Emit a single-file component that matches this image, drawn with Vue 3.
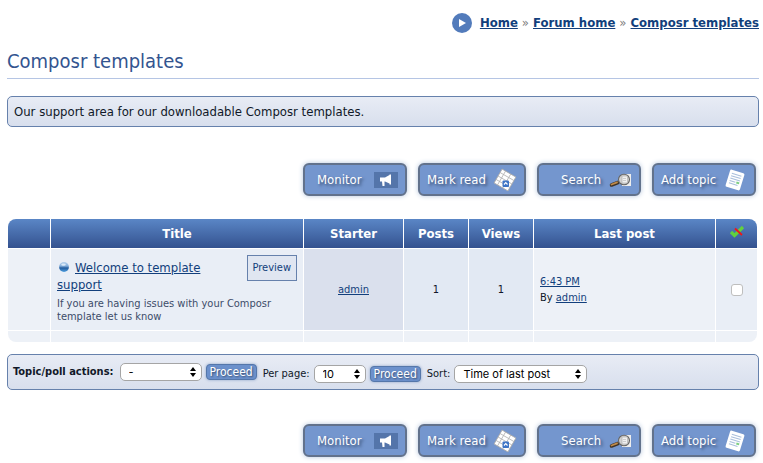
<script setup>
import { ref } from 'vue'

const crumbs = ['Home', 'Forum home', 'Composr templates']
const actions = [
  { label: 'Monitor', icon: 'monitor' },
  { label: 'Mark read', icon: 'mark' },
  { label: 'Search', icon: 'search' },
  { label: 'Add topic', icon: 'add' }
]
const places = ['top', 'bottom']
const selected = ref(false)
</script>

<template>
  <div class="page">
    <nav class="crumbs" aria-label="Breadcrumbs">
      <svg class="crumb-icon" viewBox="0 0 20 20" aria-hidden="true">
        <circle cx="10" cy="10" r="10" fill="#527bbb" />
        <path d="M7 6 L14 10 L7 14 Z" fill="#fff" />
      </svg>
      <template v-for="(crumb, i) in crumbs" :key="crumb">
        <span v-if="i" class="sep">»</span>
        <a href="#">{{ crumb }}</a>
      </template>
    </nav>

    <h1>Composr templates</h1>

    <p class="panel intro">Our support area for our downloadable Composr templates.</p>

    <template v-for="place in places" :key="place">
      <div class="buttons" :class="place">
        <button v-for="a in actions" :key="a.label" type="button" class="big" :class="a.icon">
          <span>{{ a.label }}</span>
          <svg v-if="a.icon === 'monitor'" viewBox="0 0 24 24" aria-hidden="true">
            <rect x="0" y="4" width="24" height="16" fill="#5475aa" />
            <path d="M6 9.500 L11 9.500 L15.500 7 V6.500 H17 V16.500 H15.500 V15.500 L11 13.500 H10.500 V18 H8.500 L8 13.500 H6 Z" fill="#fff" />
          </svg>
          <svg v-else-if="a.icon === 'mark'" viewBox="0 0 24 24" aria-hidden="true">
            <g transform="rotate(30 12 12)">
              <rect x="4" y="4" width="16" height="16" fill="#fff" stroke="#a8a8a8" stroke-width="0.8" />
              <path d="M4 8H20M4 12H20M4 16H20M8 4V20M14 4V20" stroke="#b4b4b4" stroke-width="0.8" />
            </g>
            <rect x="9.500" y="12.500" width="6.500" height="6.500" rx="1" fill="#3d74c6" />
            <path d="M11 16.500 L12.750 14.700 L14.500 16.500" fill="none" stroke="#fff" stroke-width="1.200" />
          </svg>
          <svg v-else-if="a.icon === 'search'" viewBox="0 0 24 24" aria-hidden="true">
            <rect x="14" y="6" width="9" height="12" fill="#eee" />
            <path d="M3.500 17 L10 14.500" stroke="#3f3328" stroke-width="3.500" stroke-linecap="round" />
            <path d="M3.500 16.500 L9 14.300" stroke="#c08a49" stroke-width="1.800" stroke-linecap="round" />
            <ellipse cx="16" cy="11.500" rx="5.500" ry="5.300" fill="#d0d0d0" stroke="#666" stroke-width="1.100" />
            <path d="M14 8H19.500V15H14Z" fill="#f0f0f0" stroke="#b0b0b0" stroke-width="0.7" />
            <path d="M15 10.500H18M15 12.500H18" stroke="#c4c4c4" stroke-width="0.8" />
          </svg>
          <svg v-else viewBox="0 0 24 24" aria-hidden="true">
            <g transform="rotate(17 12 12)">
              <rect x="4.500" y="3" width="15" height="18" rx="1.500" fill="#fff" />
              <path d="M7 6.500H17M7 9H17M7 11.500H17M7 14H13M7 16.500H16" stroke="#a9bfdc" stroke-width="1" />
              <path d="M14 14H17" stroke="#7cce82" stroke-width="2" />
            </g>
          </svg>
        </button>
      </div>

      <template v-if="place === 'top'">
        <div class="table-wrap">
          <table>
            <colgroup>
              <col class="c-mark" /><col class="c-title" /><col class="c-starter" />
              <col class="c-count" /><col class="c-count" /><col class="c-last" /><col class="c-tick" />
            </colgroup>
            <thead>
              <tr>
                <th></th>
                <th>Title</th>
                <th>Starter</th>
                <th>Posts</th>
                <th>Views</th>
                <th>Last post</th>
                <th>
                  <svg class="tick" viewBox="0 0 16 14" role="img" aria-label="Mark">
                    <path d="M2 7 L5.500 10.500 L14 2" fill="none" stroke="#62d13d" stroke-width="3.200" />
                    <path d="M6 3.500 L13 10" stroke="#f01616" stroke-width="1.800" />
                  </svg>
                </th>
              </tr>
            </thead>
            <tbody>
              <tr class="topic">
                <td></td>
                <td class="title">
                  <a href="#" class="preview">Preview</a>
                  <div class="topic-line">
                    <svg class="ball" viewBox="0 0 10 10" aria-hidden="true">
                      <defs>
                        <linearGradient id="ball" x1="0" y1="0" x2="0" y2="1">
                          <stop offset="0" stop-color="#b4d0ec" />
                          <stop offset="0.400" stop-color="#86b0dc" />
                          <stop offset="0.600" stop-color="#235c9f" />
                          <stop offset="1" stop-color="#4fa0df" />
                        </linearGradient>
                      </defs>
                      <circle cx="5" cy="5" r="4.900" fill="url(#ball)" />
                      <ellipse cx="4.500" cy="2.600" rx="2.300" ry="1.200" fill="#dceaf8" />
                    </svg>
                    <a href="#">Welcome to template support</a>
                  </div>
                  <p>If you are having issues with your Composr template let us know</p>
                </td>
                <td class="starter"><a href="#">admin</a></td>
                <td class="count">1</td>
                <td class="count">1</td>
                <td class="last"><a href="#">6:43 PM</a><br />By <a href="#">admin</a></td>
                <td class="select"><input v-model="selected" type="checkbox" aria-label="Select topic" /></td>
              </tr>
              <tr class="foot">
                <td v-for="n in 7" :key="n"></td>
              </tr>
            </tbody>
          </table>
        </div>

        <form class="panel controls" @submit.prevent>
          <div class="group first">
            <label for="poll">Topic/poll actions:</label>
            <span class="pick poll">
              <select id="poll"><option>-</option></select>
              <svg viewBox="0 0 6 10" aria-hidden="true"><path d="M0 4L3 0L6 4ZM0 6L3 10L6 6Z" /></svg>
            </span>
            <button type="submit" class="small">Proceed</button>
          </div>
          <div class="group">
            <label for="per">Per page:</label>
            <span class="pick per">
              <select id="per"><option>10</option></select>
              <svg viewBox="0 0 6 10" aria-hidden="true"><path d="M0 4L3 0L6 4ZM0 6L3 10L6 6Z" /></svg>
            </span>
            <button type="submit" class="small">Proceed</button>
          </div>
          <div class="group">
            <label for="sort">Sort:</label>
            <span class="pick sort">
              <select id="sort"><option>Time of last post</option></select>
              <svg viewBox="0 0 6 10" aria-hidden="true"><path d="M0 4L3 0L6 4ZM0 6L3 10L6 6Z" /></svg>
            </span>
          </div>
        </form>
      </template>
    </template>
  </div>
</template>

<style>
body {
  background: #fff;
}
</style>

<style scoped>
.page {
  padding: 12px 4px 5px 7px;
  font-family: Tahoma, "DejaVu Sans Condensed", "DejaVu Sans", sans-serif;
  font-size: 11px;
  line-height: 16px;
  color: #101828;
}
a {
  color: #123f7c;
}
.crumbs {
  display: flex;
  justify-content: flex-end;
  align-items: center;
  gap: 4px;
  height: 22px;
  font-size: 13px;
  font-weight: bold;
}
.crumb-icon {
  width: 20px;
  height: 20px;
  margin-right: 4px;
}
.sep {
  color: #808080;
  font-weight: normal;
}
h1 {
  margin: 13px 0 17px;
  padding-bottom: 3px;
  border-bottom: 1px solid #b5c5e4;
  font-size: 20px;
  line-height: 28px;
  font-weight: normal;
  color: #33548f;
}
.panel {
  margin: 0;
  border: 1px solid #6681ac;
  border-radius: 5px;
  background: linear-gradient(#e8ecf5, #d8dfed);
}
.intro {
  padding: 6px;
  font-size: 13px;
  line-height: 17px;
}
.buttons {
  display: flex;
  justify-content: flex-end;
  gap: 11px;
  padding-right: 3px;
}
.buttons.top {
  margin: 36px 0 22px;
}
.buttons.bottom {
  margin-top: 34px;
}
.big {
  display: flex;
  align-items: center;
  justify-content: space-between;
  width: 104px;
  height: 33px;
  padding: 0 7px;
  border: 2px solid #62728c;
  border-radius: 6px;
  background: #7496ce;
  box-shadow: 0 0 5px #b3c4dc;
  color: #fff;
  font-family: inherit;
  font-size: 13px;
  text-shadow: 2px 2px 3px #35496b;
}
.big svg {
  width: 24px;
  height: 24px;
}
.monitor {
  padding-left: 12px;
}
.mark {
  width: 108px;
}
.search {
  padding-left: 22px;
}
.table-wrap {
  padding-right: 1px;
}
table {
  width: 100%;
  table-layout: fixed;
  border-spacing: 1px;
}
.c-mark { width: 42px; }
.c-title { width: 252px; }
.c-starter { width: 99px; }
.c-count { width: 64px; }
.c-tick { width: 41px; }
th {
  height: 29px;
  padding: 0;
  background: linear-gradient(#5a86c6, #34528f);
  color: #fff;
  font-size: 13px;
}
th:first-child { border-top-left-radius: 8px; }
th:last-child { border-top-right-radius: 8px; }
.tick {
  display: block;
  width: 16px;
  height: 14px;
  margin: 0 auto 4px;
}
td {
  padding: 0;
  background: #edf1f7;
}
.topic td {
  height: 81px;
}
.topic .title {
  height: 75px;
  padding: 6px 6px 0;
  background: #e9eef6;
  vertical-align: top;
}
.preview {
  float: right;
  padding: 5px;
  line-height: 14px;
  border: 1px solid #6681ac;
  background: #e0e6f1;
  text-decoration: none;
}
.ball {
  width: 10px;
  height: 10px;
  margin: 0 6px 0 2px;
}
.topic-line {
  padding-top: 4px;
  font-size: 13px;
  line-height: 17px;
}
.title p {
  margin: 4px 0 0;
  line-height: 13px;
  color: #3c4c69;
}
.topic .starter {
  background: #dae0ed;
  text-align: center;
}
.topic .count {
  background: #e2e9f3;
  text-align: center;
}
.topic .last {
  padding-left: 6px;
}
.topic .select {
  background: #e9eef6;
  text-align: center;
}
.select input {
  appearance: none;
  display: block;
  width: 12px;
  height: 12px;
  margin: 0 auto;
  border: 1px solid #bebebe;
  border-radius: 3px;
  background: #fff;
}
.foot td {
  height: 11px;
}
.foot td:first-child { border-bottom-left-radius: 8px; }
.foot td:last-child { border-bottom-right-radius: 8px; }
.controls {
  display: flex;
  align-items: flex-end;
  gap: 6px;
  padding: 8px 5px 6px;
  margin-top: 11px;
}
.group {
  display: flex;
  align-items: center;
  gap: 4px;
}
.group.first {
  padding-bottom: 2px;
}
.first label {
  margin-right: 2px;
  font-weight: bold;
}
.pick {
  display: grid;
  align-items: center;
}
.pick select,
.pick svg {
  grid-area: 1 / 1;
}
.pick svg {
  justify-self: end;
  width: 6px;
  height: 10px;
  margin-right: 6px;
  pointer-events: none;
}
.pick select {
  appearance: none;
  width: 100%;
  height: 18px;
  padding: 0 8px;
  border: 1px solid #a5a5a5;
  border-radius: 5px;
  background: #fff;
  color: #000;
  font-family: Inter, sans-serif;
  font-size: 11px;
}
.poll { width: 82px; }
.per { width: 52px; }
.sort { width: 133px; }
.small {
  height: 16px;
  padding: 0 3px;
  border: 1px solid #5577aa;
  border-radius: 4px;
  background: #6c91cc;
  box-shadow: 0 0 3px #8ba3c8;
  color: #fff;
  font-family: inherit;
  font-size: 12px;
  line-height: 14px;
  text-shadow: 1px 1px 2px #35496b;
}
</style>
